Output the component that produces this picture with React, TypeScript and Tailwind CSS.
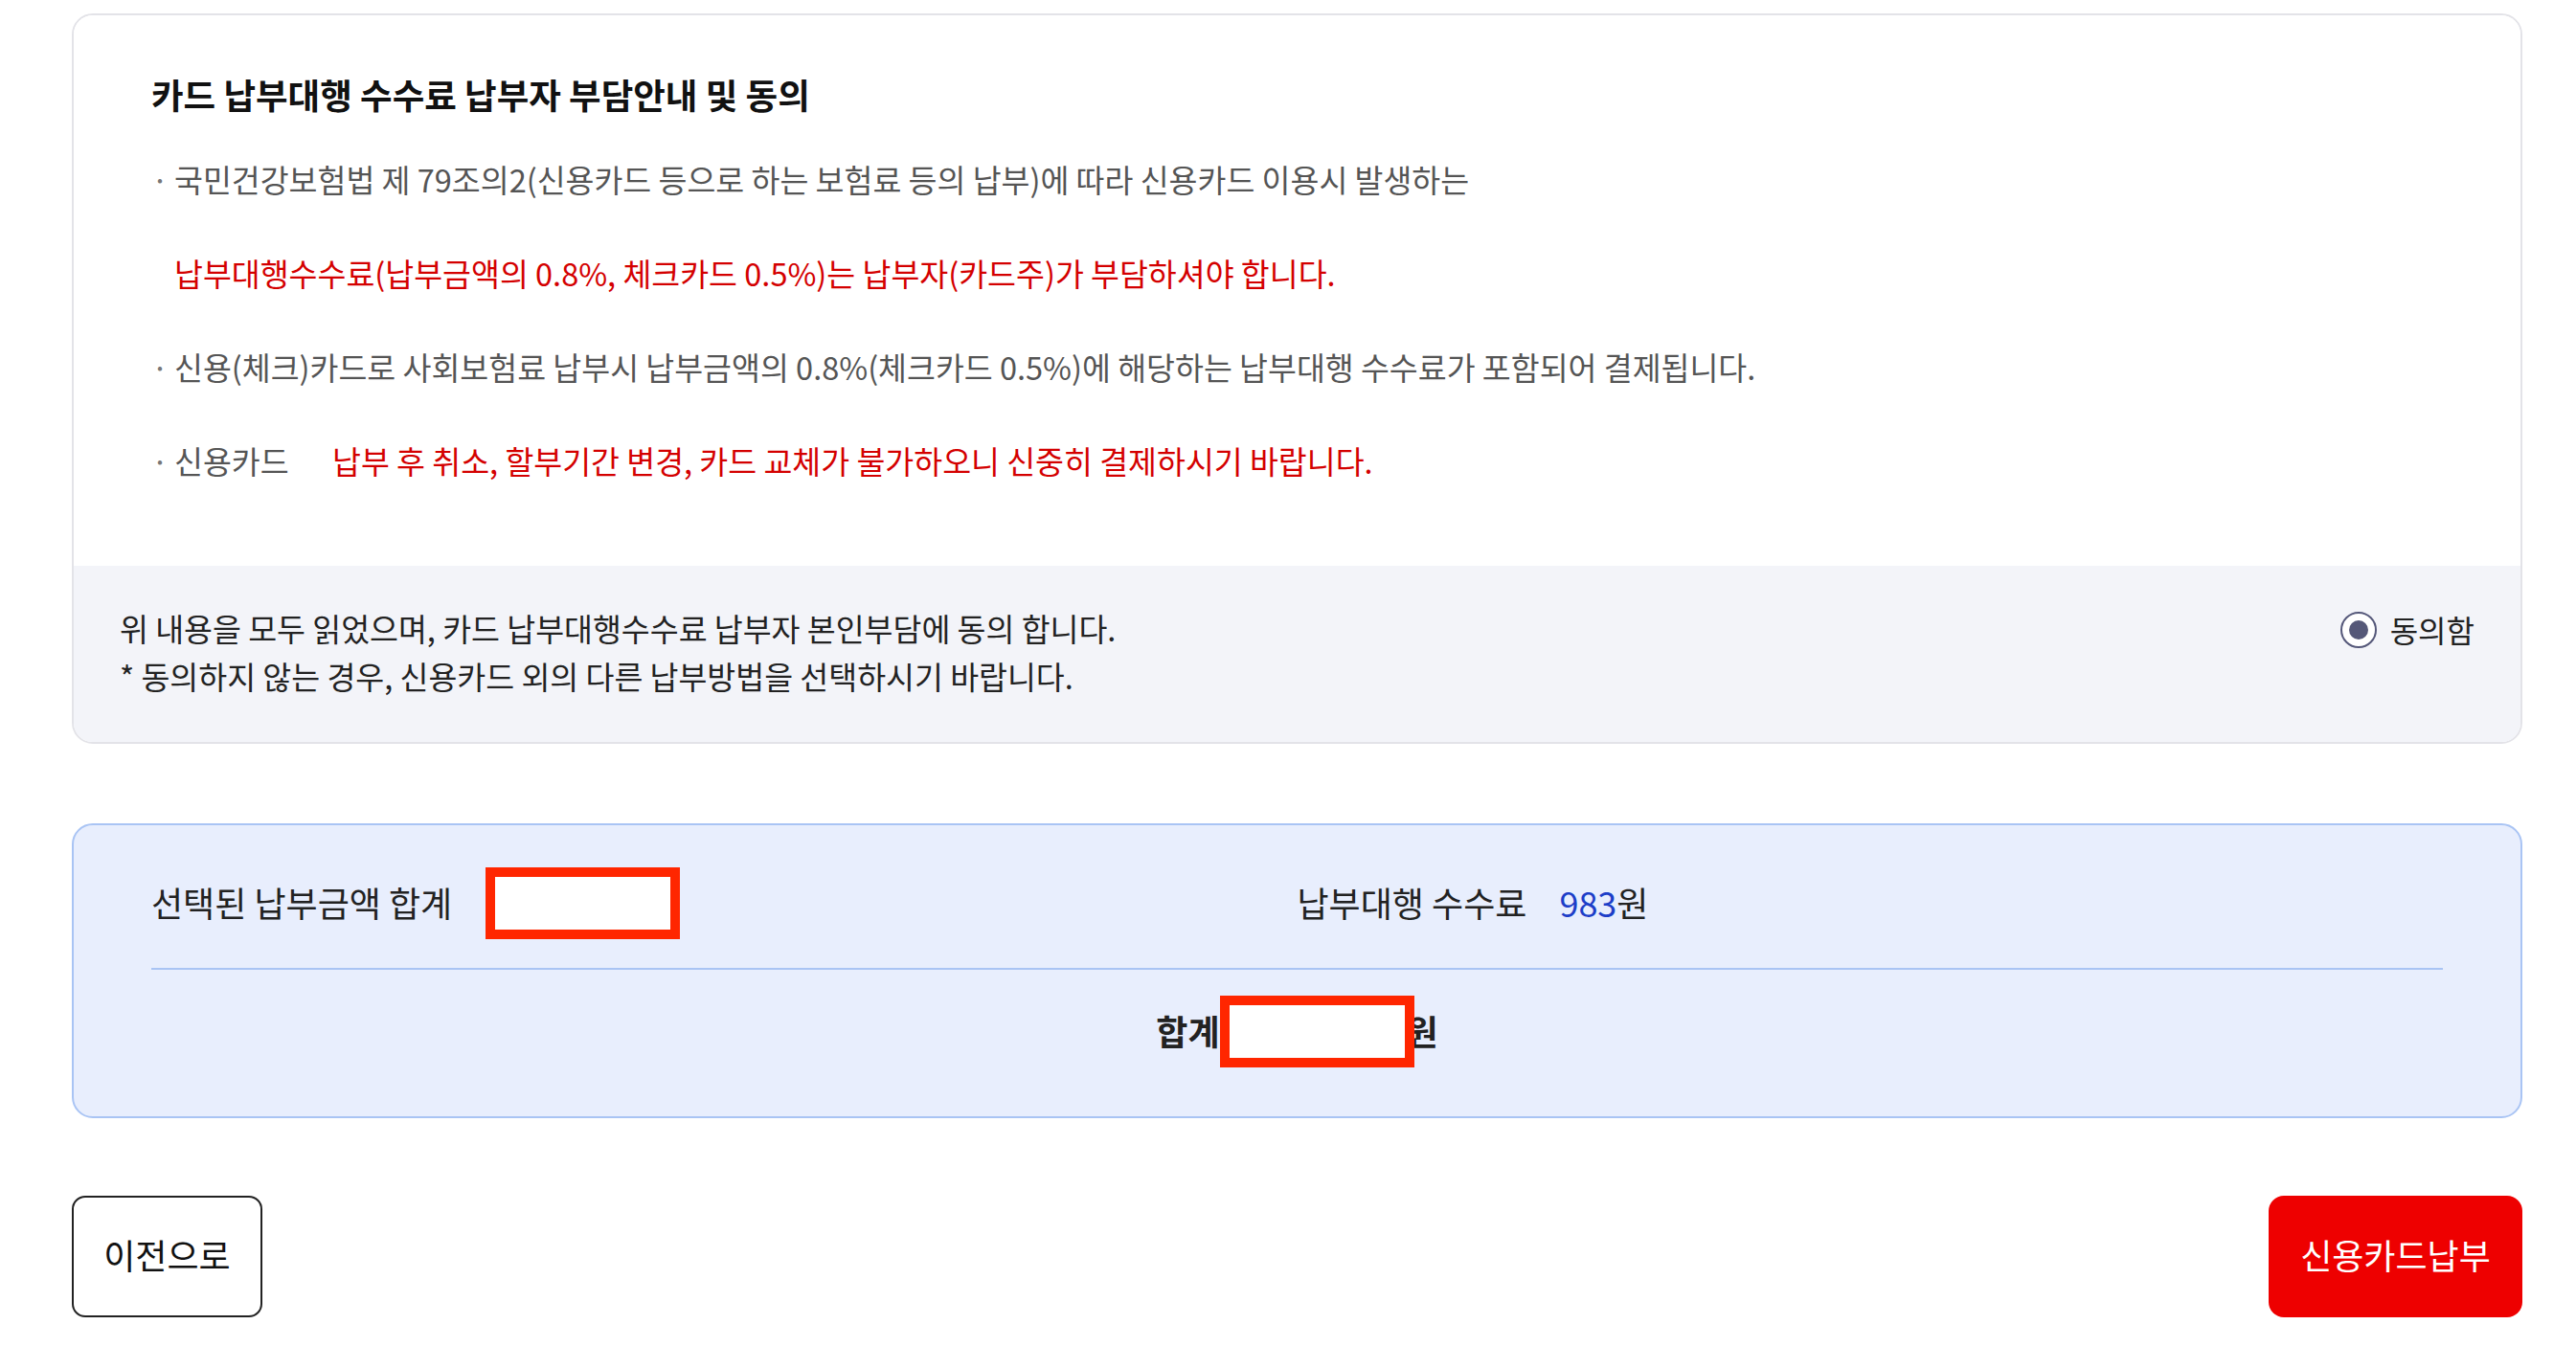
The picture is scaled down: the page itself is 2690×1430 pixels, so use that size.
const bullets = [
  { kind: 'gray', text: '국민건강보험법 제 79조의2(신용카드 등으로 하는 보험료 등의 납부)에 따라 신용카드 이용시 발생하는' },
  { kind: 'red', text: '납부대행수수료(납부금액의 0.8%, 체크카드 0.5%)는 납부자(카드주)가 부담하셔야 합니다.' },
  { kind: 'gray', text: '신용(체크)카드로 사회보험료 납부시 납부금액의 0.8%(체크카드 0.5%)에 해당하는 납부대행 수수료가 포함되어 결제됩니다.' },
]

function Dot() {
  return <span className="w-[24px] shrink-0 text-[#777]">·</span>
}

function Redacted() {
  return <span className="relative z-10 inline-block w-[203px] h-[75px] border-[10px] border-[#ff2600] bg-white" />
}

export default function App() {
  return (
    <div className="min-h-screen bg-white pl-[75px] pr-[56px] pt-[14px] pb-[54px] font-['Noto_Sans_CJK_KR','Noto_Sans',sans-serif] text-[#222]">
      {/* 안내 및 동의 */}
      <section className="rounded-[22px] border-2 border-[#e3e3e8] overflow-hidden">
        <div className="pl-[81px] pr-[60px] pt-[58px] pb-[85px] bg-white">
          <h2 className="h-[50px] leading-[50px] text-[36.5px] font-bold text-[#111]">
            카드 납부대행 수수료 납부자 부담안내 및 동의
          </h2>
          <ul className="mt-[38px] flex flex-col gap-[48px] text-[32.5px] leading-[50px]">
            {bullets.map((b, i) => (
              <li key={i} className="flex h-[50px]">
                {b.kind === 'gray' ? <Dot /> : <span className="w-[24px] shrink-0" />}
                <span className={b.kind === 'red' ? 'text-[#d40000]' : 'text-[#555]'}>{b.text}</span>
              </li>
            ))}
            <li className="flex h-[50px]">
              <Dot />
              <span className="text-[#555] w-[120px] shrink-0 whitespace-nowrap">신용카드</span>
              <span className="ml-[45px] text-[#d40000]">
                납부 후 취소, 할부기간 변경, 카드 교체가 불가하오니 신중히 결제하시기 바랍니다.
              </span>
            </li>
          </ul>
        </div>
        <div className="flex items-start justify-between bg-[#f3f4f9] pl-[48px] pr-[48px] pt-[40px] pb-[44px] text-[32.5px] leading-[50px]">
          <div>
            <p>위 내용을 모두 읽었으며, 카드 납부대행수수료 납부자 본인부담에 동의 합니다.</p>
            <p>* 동의하지 않는 경우, 신용카드 외의 다른 납부방법을 선택하시기 바랍니다.</p>
          </div>
          <label className="flex items-center gap-[14px] h-[50px] mt-[2px] text-[32px]">
            <span className="flex items-center justify-center w-[38px] h-[38px] rounded-full border-2 border-[#55587a] bg-white">
              <span className="w-[20px] h-[20px] rounded-full bg-[#555878]" />
            </span>
            <span className="pb-[3px]">동의함</span>
          </label>
        </div>
      </section>

      {/* 합계 */}
      <section className="mt-[83px] rounded-[22px] border-2 border-[#a9c4f4] bg-[#e8eefd] px-[81px] pt-[44px] pb-[51px] text-[36px]">
        <div className="grid grid-cols-2 h-[75px] items-center">
          <div className="flex items-center gap-[35px]">
            <span className="pb-[3px]">선택된 납부금액 합계</span>
            <Redacted />
          </div>
          <div className="flex items-center pb-[3px]">
            <span>납부대행 수수료</span>
            <span className="ml-[34px] text-[#1d3ec8]">983</span>
            <span>원</span>
          </div>
        </div>
        <div className="mt-[30px] h-[2px] bg-[#a9c4f4]" />
        <div className="mt-[27px] h-[75px] flex items-center justify-center font-bold">
          <span className="pb-[3px]">합계</span>
          <Redacted />
          <span className="-ml-[8px] pb-[3px]">원</span>
        </div>
      </section>

      {/* 버튼 */}
      <div className="mt-[81px] flex justify-between">
        <button className="w-[199px] h-[127px] pb-[5px] rounded-[14px] border-2 border-[#222] bg-white text-[36px] text-[#111]">
          이전으로
        </button>
        <button className="w-[265px] h-[127px] pb-[5px] rounded-[16px] bg-[#ee0000] text-[36px] text-white">
          신용카드납부
        </button>
      </div>
    </div>
  )
}
